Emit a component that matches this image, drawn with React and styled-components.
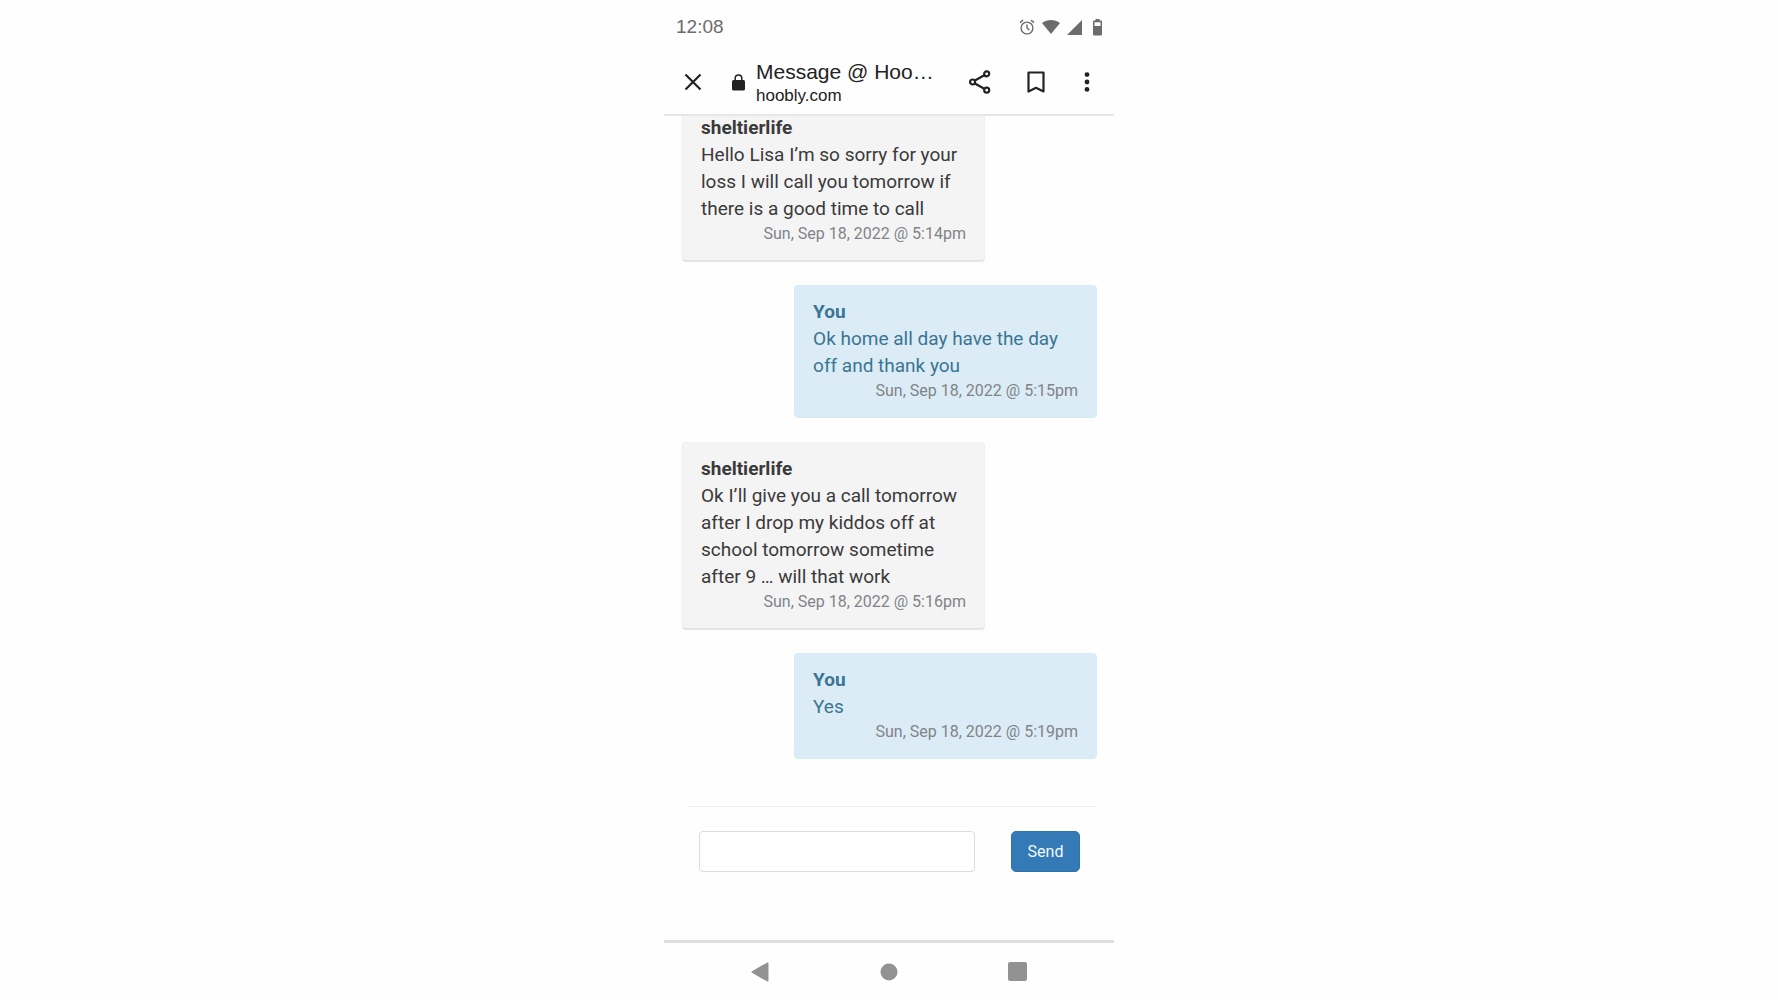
import React from "react";
import styled, { createGlobalStyle } from "styled-components";

const GlobalStyle = createGlobalStyle`
  *, *::before, *::after { box-sizing: border-box; }
  body { margin: 0; background: #fefefe; }
  button, input { font: inherit; }
`;

const uiFont = `"Liberation Sans", Arial, sans-serif`;

const Phone = styled.div`
  display: flex;
  flex-direction: column;
  width: 100%;
  max-width: 450px;
  height: 100vh;
  margin: 0 auto;
  font-family: Roboto, sans-serif;
  color: #333;
`;

const StatusBar = styled.div`
  display: flex;
  flex: none;
  align-items: center;
  justify-content: space-between;
  height: 54px;
  padding: 0 8px 0 12px;
  font: 19px/24px ${uiFont};
  color: #6c6c6c;
`;

const StatusIcons = styled.div`
  display: flex;
  align-items: center;
  gap: 7px;
  svg { display: block; }
`;

const Header = styled.header`
  display: flex;
  flex: none;
  align-items: center;
  height: 62px;
  padding: 0 12px 4px 14px;
  border-bottom: 2px solid #e6e6e6;
  color: #222;
`;

const IconButton = styled.button`
  display: grid;
  place-items: center;
  flex: none;
  width: ${(p) => p.$width}px;
  height: 40px;
  padding: 0;
  border: 0;
  background: none;
  color: inherit;
`;

const Site = styled.div`
  display: flex;
  flex: 1;
  align-items: center;
  gap: 11px;
  min-width: 0;
  padding-left: 24px;
`;

const SiteText = styled.div`
  min-width: 0;
  padding-top: 4px;
  font-family: ${uiFont};
`;

const Title = styled.h1`
  margin: 0;
  font-size: 21px;
  font-weight: 400;
  line-height: 24px;
  white-space: nowrap;
`;

const Domain = styled.div`
  font-size: 17px;
  line-height: 24px;
`;

const Actions = styled.div`
  display: flex;
  gap: 16px;
`;

const Scroller = styled.main`
  display: flex;
  flex: 1;
  flex-direction: column-reverse;
  min-height: 0;
  overflow: hidden;
  padding: 0 17px 0 18px;
`;

const Page = styled.div`
  flex: none;
  padding-bottom: 68px;
`;

const Thread = styled.div`
  display: flex;
  flex-direction: column;
  gap: 24px;
`;

const Bubble = styled.article`
  align-self: ${(p) => (p.$mine ? "flex-end" : "flex-start")};
  width: 73%;
  padding: 12px 18px 14px;
  border: 1px solid ${(p) => (p.$mine ? "#d5ecf4" : "#f0f0f0")};
  border-bottom-color: ${(p) => (p.$mine ? "#d5ecf4" : "#e2e2e2")};
  border-radius: 4px;
  background: ${(p) => (p.$mine ? "#dbecf6" : "#f4f4f4")};
  box-shadow: ${(p) => (p.$mine ? "none" : "0 1px 1px #e6e6e6")};
  color: ${(p) => (p.$mine ? "#3a7592" : "#3a3a3a")};
`;

const Author = styled.strong`
  display: block;
  font-size: 19px;
  line-height: 27px;
`;

const Message = styled.p`
  margin: 0;
  font-size: 19px;
  line-height: 27px;
`;

const Time = styled.time`
  display: block;
  font-size: 16px;
  line-height: 24px;
  text-align: right;
  color: #808487;
`;

const Composer = styled.form`
  display: flex;
  gap: 36px;
  margin: 47px 0 0 5px;
  padding: 24px 17px 0 12px;
  border-top: 1px solid #f0f0f0;
`;

const TextBox = styled.input`
  flex: 1;
  min-width: 0;
  height: 41px;
  padding: 6px 12px;
  border: 1px solid #dcdcdc;
  border-radius: 4px;
  background: #fff;
`;

const SendButton = styled.button`
  width: 69px;
  height: 41px;
  padding: 0;
  border: 1px solid #2e73b0;
  border-radius: 5px;
  background: #337ab7;
  color: #f4f9fd;
  font-size: 16px;
`;

const NavBar = styled.nav`
  display: flex;
  flex: none;
  align-items: center;
  height: 60px;
  padding: 0 32px;
  border-top: 3px solid #dfdfdf;
  color: #929292;
`;

const NavButton = styled.button`
  display: grid;
  place-items: center;
  flex: 1;
  height: 48px;
  padding: 0;
  border: 0;
  background: none;
  color: inherit;
`;

const messages = [
  { author: "sheltierlife", text: "Hello Lisa I’m so sorry for your loss I will call you tomorrow if there is a good time to call", time: "Sun, Sep 18, 2022 @ 5:14pm" },
  { author: "You", mine: true, text: "Ok home all day have the day off and thank you", time: "Sun, Sep 18, 2022 @ 5:15pm" },
  { author: "sheltierlife", text: "Ok I’ll give you a call tomorrow after I drop my kiddos off at school tomorrow sometime after 9 … will that work", time: "Sun, Sep 18, 2022 @ 5:16pm" },
  { author: "You", mine: true, text: "Yes", time: "Sun, Sep 18, 2022 @ 5:19pm" },
];

const AlarmIcon = () => (
  <svg width="16" height="16" viewBox="0 0 16 16" fill="none" stroke="currentColor" strokeWidth="1.4">
    <circle cx="8" cy="9" r="5.9" />
    <path d="M8 5.5V9l2.4 2.2M1 3.6 4 1.1M15 3.6 12 1.1" />
  </svg>
);

const WifiIcon = () => (
  <svg width="18" height="16" viewBox="0 0 18 16" fill="currentColor">
    <path d="M0 4C5 0 13 0 18 4L9 15Z" />
  </svg>
);

const SignalIcon = () => (
  <svg width="15" height="15" viewBox="0 0 15 15" fill="currentColor">
    <path d="M15 0V15H0Z" />
  </svg>
);

const BatteryIcon = () => (
  <svg width="17" height="17" viewBox="0 0 17 17" fill="currentColor">
    <path fillRule="evenodd" d="M6.500 0h4v1.500H12q1 0 1 1V15q0 1.500-1 1.500H5Q4 16.500 4 15V2.500q0-1 1-1h1.500ZM5.500 3.200V7h6V3.200Z" />
  </svg>
);

const CloseIcon = () => (
  <svg width="18" height="18" viewBox="0 0 18 18" stroke="currentColor" strokeWidth="2.2">
    <path d="M1.500 1.500l15 15M16.500 1.500l-15 15" />
  </svg>
);

const LockIcon = () => (
  <svg width="13" height="17" viewBox="0 0 13 17">
    <rect x="0" y="6" width="13" height="10.500" rx="1.500" fill="currentColor" />
    <path d="M3.200 6.500V4.200a3.300 3.300 0 0 1 6.600 0v2.300" fill="none" stroke="currentColor" strokeWidth="1.500" />
  </svg>
);

const ShareIcon = () => (
  <svg width="22" height="24" viewBox="0 0 22 24" fill="none" stroke="currentColor" strokeWidth="2.2">
    <path d="M5.500 10.800 15.700 5M5.500 13.200 15.700 19" />
    <circle cx="3.600" cy="12" r="2.500" />
    <circle cx="17.700" cy="3.800" r="2.500" />
    <circle cx="17.700" cy="20.200" r="2.500" />
  </svg>
);

const BookmarkIcon = () => (
  <svg width="18" height="22" viewBox="0 0 18 22" fill="none" stroke="currentColor" strokeWidth="2.200" strokeLinejoin="round">
    <path d="M1.500 1.500h15v19L9 16.800 1.500 20.500Z" />
  </svg>
);

const MoreIcon = () => (
  <svg width="6" height="20" viewBox="0 0 6 20" fill="currentColor">
    <circle cx="3" cy="2.600" r="2.400" />
    <circle cx="3" cy="10" r="2.400" />
    <circle cx="3" cy="17.400" r="2.400" />
  </svg>
);

export default function App() {
  return (
    <>
      <GlobalStyle />
      <Phone>
        <StatusBar>
          <span>12:08</span>
          <StatusIcons>
            <AlarmIcon />
            <WifiIcon />
            <SignalIcon />
            <BatteryIcon />
          </StatusIcons>
        </StatusBar>
        <Header>
          <IconButton $width={30} type="button" aria-label="Close"><CloseIcon /></IconButton>
          <Site>
            <LockIcon />
            <SiteText>
              <Title>Message @ Hoo…</Title>
              <Domain>hoobly.com</Domain>
            </SiteText>
          </Site>
          <Actions>
            <IconButton $width={40} type="button" aria-label="Share"><ShareIcon /></IconButton>
            <IconButton $width={40} type="button" aria-label="Bookmark"><BookmarkIcon /></IconButton>
            <IconButton $width={30} type="button" aria-label="More"><MoreIcon /></IconButton>
          </Actions>
        </Header>
        <Scroller>
          <Page>
            <Thread>
              {messages.map((m) => (
                <Bubble key={m.time} $mine={m.mine}>
                  <Author>{m.author}</Author>
                  <Message>{m.text}</Message>
                  <Time>{m.time}</Time>
                </Bubble>
              ))}
            </Thread>
            <Composer onSubmit={(e) => e.preventDefault()}>
              <TextBox type="text" aria-label="Message" />
              <SendButton type="submit">Send</SendButton>
            </Composer>
          </Page>
        </Scroller>
        <NavBar>
          <NavButton type="button" aria-label="Back">
            <svg width="18" height="20" viewBox="0 0 18 20"><path d="M1.500 10 16.500 1.500v17Z" fill="currentColor" stroke="currentColor" strokeWidth="2" strokeLinejoin="round" /></svg>
          </NavButton>
          <NavButton type="button" aria-label="Home">
            <svg width="18" height="18" viewBox="0 0 18 18"><circle cx="9" cy="9" r="8.500" fill="currentColor" /></svg>
          </NavButton>
          <NavButton type="button" aria-label="Recent apps">
            <svg width="19" height="19" viewBox="0 0 19 19"><rect width="19" height="19" rx="2" fill="currentColor" /></svg>
          </NavButton>
        </NavBar>
      </Phone>
    </>
  );
}
